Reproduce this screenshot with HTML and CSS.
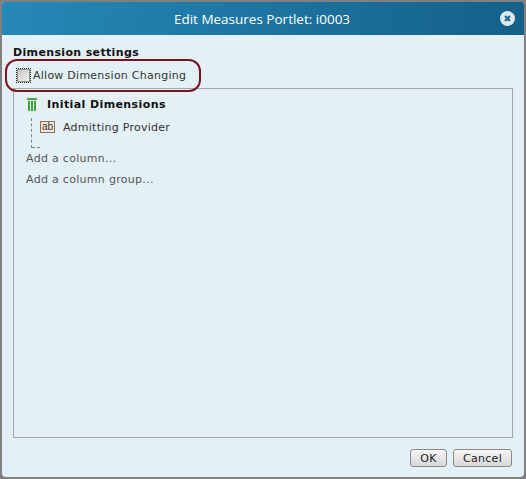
FILE: index.html
```html
<!DOCTYPE html>
<html lang="en">
<head>
    <meta charset="UTF-8">
    <title>Edit Measures Portlet: i0003</title>
    <link rel="stylesheet" href="styles.css">
</head>
<body>
    <div class="dialog">
        <header class="title-bar">
            <h1>Edit Measures Portlet: i0003</h1>
            <svg class="close-icon" width="15" height="15" viewBox="0 0 15 15">
                <circle cx="7.5" cy="7.5" r="7.5" fill="#dfe9f0"/>
                <path d="M5 5l5 5M10 5l-5 5" stroke="#1d6792" stroke-width="2.2" fill="none"/>
            </svg>
        </header>

        <div class="content">
            <h2 class="section-title">Dimension settings</h2>
            <label class="check-row">
                <span class="focus-box"><span class="checkbox"></span></span>
                Allow Dimension Changing
            </label>
            <div class="callout"></div>

            <section class="panel">
                <div class="group-row">
                    <svg class="group-icon" width="10" height="13" viewBox="0 0 10 13">
                        <path d="M0 0h10v2H0z" fill="#3fa33f"/>
                        <path d="M1 3h2v10H1zM4 3h2v10H4zM7 3h2v10H7z" fill="#3fa33f"/>
                    </svg>
                    <span class="group-name">Initial Dimensions</span>
                </div>
                <div class="tree">
                    <div class="tree-row">
                        <span class="type-icon">ab</span>
                        <span>Admitting Provider</span>
                    </div>
                </div>
                <a class="add-link">Add a column...</a>
                <a class="add-link">Add a column group...</a>
            </section>

            <footer class="buttons">
                <button class="ok-btn">OK</button>
                <button class="cancel-btn">Cancel</button>
            </footer>
        </div>
    </div>
</body>
</html>
```

FILE: styles.css
```css
* {
    margin: 0;
    padding: 0;
    box-sizing: border-box;
}

html,
body {
    height: 100%;
}

body {
    background-color: #808080;
    font-family: 'DejaVu Sans', Verdana, sans-serif;
    font-size: 11px;
    letter-spacing: 0.25px;
    color: #333;
    padding: 2px;
}

.dialog {
    height: 475px;
    display: flex;
    flex-direction: column;
    background-color: #e3f0f6;
    border-radius: 2px 2px 4px 4px;
    overflow: hidden;
}

.title-bar {
    height: 33px;
    flex-shrink: 0;
    display: flex;
    align-items: center;
    justify-content: center;
    position: relative;
    background: linear-gradient(100deg, #2589b6, #146089);
}

.title-bar h1 {
    font-family: 'Open Sans', sans-serif;
    font-size: 13.5px;
    font-weight: 400;
    letter-spacing: 0;
    color: #fff;
    padding-right: 2px;
}

.close-icon {
    position: absolute;
    top: 9px;
    right: 9px;
}

.content {
    flex: 1;
    display: flex;
    flex-direction: column;
    padding: 11px 11px 10px 11px;
    position: relative;
}

.section-title {
    font-size: 11px;
    font-weight: 700;
    letter-spacing: 0.35px;
    color: #111;
    line-height: 14px;
}

.check-row {
    display: flex;
    align-items: center;
    height: 18px;
    margin-top: 6px;
    padding-left: 3px;
    color: #333;
}

.focus-box {
    width: 15px;
    height: 15px;
    margin-right: 2px;
    border: 1px dotted #222;
    display: flex;
    align-items: center;
    justify-content: center;
}

.checkbox {
    width: 13px;
    height: 13px;
    border: 1px solid #8e8f8f;
    background: linear-gradient(135deg, #c8c8c8, #eeeeee);
}

.callout {
    position: absolute;
    left: 3px;
    top: 24px;
    width: 196px;
    height: 33px;
    border: 2px solid #7b1420;
    border-radius: 12px;
}

.panel {
    flex: 1;
    margin-top: 4px;
    border: 1px solid #a6a6a6;
    padding: 8px 12px;
}

.group-row {
    display: flex;
    align-items: center;
    height: 15px;
    gap: 10px;
    padding-left: 1px;
}

.group-name {
    font-weight: 700;
    letter-spacing: 0.4px;
    color: #111;
}

.tree {
    margin: 6px 0 0 5px;
    padding: 0 0 0 8px;
    height: 30px;
    border-left: 1px dashed #808080;
    position: relative;
}

.tree::after {
    content: "";
    position: absolute;
    left: 0;
    bottom: 0;
    width: 8px;
    border-bottom: 1px dashed #808080;
}

.tree-row {
    display: flex;
    align-items: center;
    gap: 8px;
    height: 18px;
}

.type-icon {
    width: 15px;
    height: 12px;
    border: 1px solid #94694f;
    background-color: #f3e8dc;
    font-family: 'Liberation Sans', sans-serif;
    font-size: 10px;
    line-height: 10px;
    text-align: center;
    letter-spacing: 0;
    color: #333;
}

.add-link {
    display: block;
    height: 21px;
    line-height: 21px;
    letter-spacing: 0.3px;
    color: #555;
}

.buttons {
    display: flex;
    justify-content: flex-end;
    gap: 6px;
    margin-top: 11px;
    padding-right: 1px;
}

.buttons button {
    height: 18px;
    border: 1px solid #8a8a8a;
    border-radius: 3px;
    background: linear-gradient(#f6f6f6, #d8d8d8);
    font-family: 'DejaVu Sans', Verdana, sans-serif;
    font-size: 11px;
    letter-spacing: 0.3px;
    color: #222;
}

.ok-btn {
    width: 37px;
}

.cancel-btn {
    width: 59px;
}
```
